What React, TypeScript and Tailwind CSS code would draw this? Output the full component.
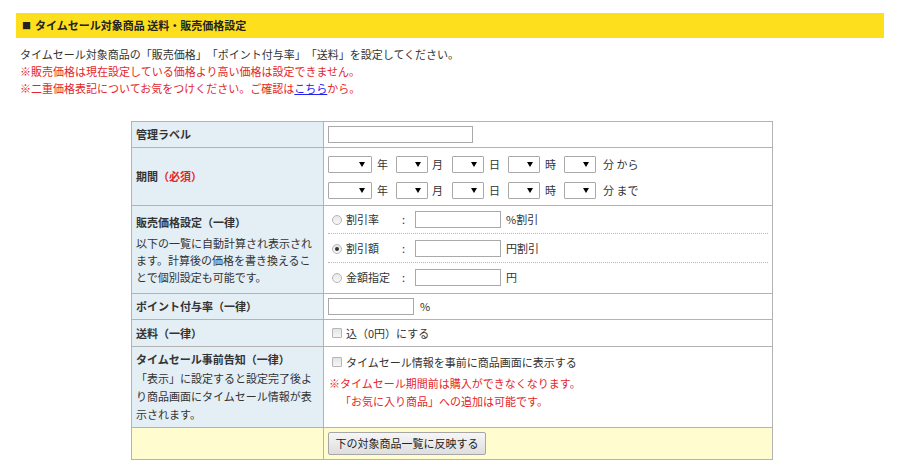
import React from "react";

function Sel({ w }: { w: string }) {
  return (
    <div className={`${w} h-[17px] border border-[#a9a9a9] bg-white flex items-center justify-end pr-[6px] rounded-[1px]`}>
      <span className="w-0 h-0 border-l-[3px] border-r-[3px] border-t-[5px] border-l-transparent border-r-transparent border-t-black" />
    </div>
  );
}

function Radio({ on }: { on?: boolean }) {
  return (
    <span className="w-[10px] h-[10px] rounded-full border border-[#b5b5b5] bg-gradient-to-b from-[#e8e8e8] to-[#f8f8f8] flex items-center justify-center">
      {on && <span className="w-[4px] h-[4px] rounded-full bg-[#333]" />}
    </span>
  );
}

function Check() {
  return <span className="w-[10px] h-[10px] border border-[#b5b5b5] bg-gradient-to-b from-[#e4e4e4] to-[#f6f6f6] rounded-[1px] inline-block" />;
}

function Input({ w }: { w: string }) {
  return <div className={`${w} h-[17px] border border-[#a9a9a9] bg-white`} />;
}

function DateRow({ suffix }: { suffix: string }) {
  return (
    <div className="flex items-center h-[17px]">
      <Sel w="w-[44px]" />
      <span className="ml-[5px] w-[19px]">年</span>
      <Sel w="w-[32px]" />
      <span className="ml-[4px] w-[20px]">月</span>
      <Sel w="w-[32px]" />
      <span className="ml-[5px] w-[19px]">日</span>
      <Sel w="w-[32px]" />
      <span className="ml-[5px] w-[19px]">時</span>
      <Sel w="w-[32px]" />
      <span className="ml-[7px]">分 {suffix}</span>
    </div>
  );
}

export default function App() {
  const cellL = "w-[192px] shrink-0 bg-[#e4eef5] border-r border-[#b3b3b3] pl-[4px] flex flex-col justify-center";
  const cellR = "flex-1 bg-white pl-[4px] flex flex-col justify-center";
  return (
    <div className="w-[900px] h-[473px] bg-white text-[#333] text-[11px] leading-[17px] font-['Meiryo','Noto_Sans_CJK_JP',sans-serif] [text-spacing-trim:space-all] pt-[13px] px-[16px]">
      <div className="h-[25px] bg-[#fedf1e] flex items-center pl-[6px] font-bold text-[#222]">
        <span className="text-[9px] mr-[4px]">■</span>タイムセール対象商品 送料・販売価格設定
      </div>
      <div className="pl-[4px] pt-[8px]">
        <p>タイムセール対象商品の「販売価格」「ポイント付与率」「送料」を設定してください。</p>
        <p className="text-[#e4262a]">※販売価格は現在設定している価格より高い価格は設定できません。</p>
        <p className="text-[#e4262a]">
          ※二重価格表記についてお気をつけください。ご確認は<span className="text-[#2222ee] underline">こちら</span>から。
        </p>
      </div>

      <div className="ml-[115px] mt-[24px] w-[642px] border border-[#b3b3b3]">
        <div className="flex h-[26px] border-b border-[#b3b3b3]">
          <div className={`${cellL} font-bold`}>管理ラベル</div>
          <div className={cellR}>
            <Input w="w-[145px]" />
          </div>
        </div>

        <div className="flex h-[58px] border-b border-[#b3b3b3]">
          <div className={`${cellL} font-bold`}>
            <span>
              期間<span className="text-[#e4262a]">（必須）</span>
            </span>
          </div>
          <div className={`${cellR} gap-[9px] pt-[1px]`}>
            <DateRow suffix="から" />
            <DateRow suffix="まで" />
          </div>
        </div>

        <div className="flex h-[88px] border-b border-[#b3b3b3]">
          <div className={cellL}>
            <p className="font-bold mb-[4px]">販売価格設定（一律）</p>
            <p className="pr-[8px]">以下の一覧に自動計算され表示されます。計算後の価格を書き換えることで個別設定も可能です。</p>
          </div>
          <div className="flex-1 bg-white pl-[4px] pr-[4px] flex flex-col pt-[5px]">
            <div className="flex items-center h-[17px]">
              <span className="ml-[4px]"><Radio /></span>
              <span className="ml-[4px] w-[56px]">割引率</span>
              <span className="w-[13px]">:</span>
              <Input w="w-[86px]" />
              <span className="ml-[5px]">%割引</span>
            </div>
            <div className="border-b border-dotted border-[#b8b8b8] mt-[5px] mb-[6px]" />
            <div className="flex items-center h-[17px]">
              <span className="ml-[4px]"><Radio on /></span>
              <span className="ml-[4px] w-[56px]">割引額</span>
              <span className="w-[13px]">:</span>
              <Input w="w-[86px]" />
              <span className="ml-[5px]">円割引</span>
            </div>
            <div className="border-b border-dotted border-[#b8b8b8] mt-[5px] mb-[6px]" />
            <div className="flex items-center h-[17px]">
              <span className="ml-[4px]"><Radio /></span>
              <span className="ml-[4px] w-[56px]">金額指定</span>
              <span className="w-[13px]">:</span>
              <Input w="w-[86px]" />
              <span className="ml-[5px]">円</span>
            </div>
          </div>
        </div>

        <div className="flex h-[26px] border-b border-[#b3b3b3]">
          <div className={`${cellL} font-bold`}>ポイント付与率（一律）</div>
          <div className={`${cellR}`}>
            <div className="flex items-center">
              <Input w="w-[86px]" />
              <span className="ml-[6px]">%</span>
            </div>
          </div>
        </div>

        <div className="flex h-[27px] border-b border-[#b3b3b3]">
          <div className={`${cellL} font-bold`}>送料（一律）</div>
          <div className={cellR}>
            <div className="flex items-center">
              <span className="ml-[4px] flex"><Check /></span>
              <span className="ml-[4px]">込（0円）にする</span>
            </div>
          </div>
        </div>

        <div className="flex h-[81px] border-b border-[#b3b3b3]">
          <div className={cellL}>
            <p className="font-bold mb-[1px]">タイムセール事前告知（一律）</p>
            <p className="pr-[8px] leading-[18px]">「表示」に設定すると設定完了後より商品画面にタイムセール情報が表示されます。</p>
          </div>
          <div className="flex-1 bg-white pl-[5px] pt-[6px] flex flex-col">
            <div className="flex items-center h-[18px]">
              <span className="ml-[3px] flex"><Check /></span>
              <span className="ml-[4px]">タイムセール情報を事前に商品画面に表示する</span>
            </div>
            <p className="text-[#e4262a] mt-[3px] leading-[18px]">※タイムセール期間前は購入ができなくなります。</p>
            <p className="text-[#e4262a] pl-[11px] leading-[18px]">「お気に入り商品」への追加は可能です。</p>
          </div>
        </div>

        <div className="flex h-[31px] bg-[#fffdd0]">
          <div className="w-[192px] shrink-0 border-r border-[#b3b3b3]" />
          <div className="flex-1 pl-[4px] flex items-center">
            <button className="h-[23px] w-[158px] border border-[#a6a6a6] rounded-[2px] bg-gradient-to-b from-[#f6f6f6] to-[#dedede] text-[11px] text-[#222] flex items-center justify-center">
              下の対象商品一覧に反映する
            </button>
          </div>
        </div>
      </div>
    </div>
  );
}
